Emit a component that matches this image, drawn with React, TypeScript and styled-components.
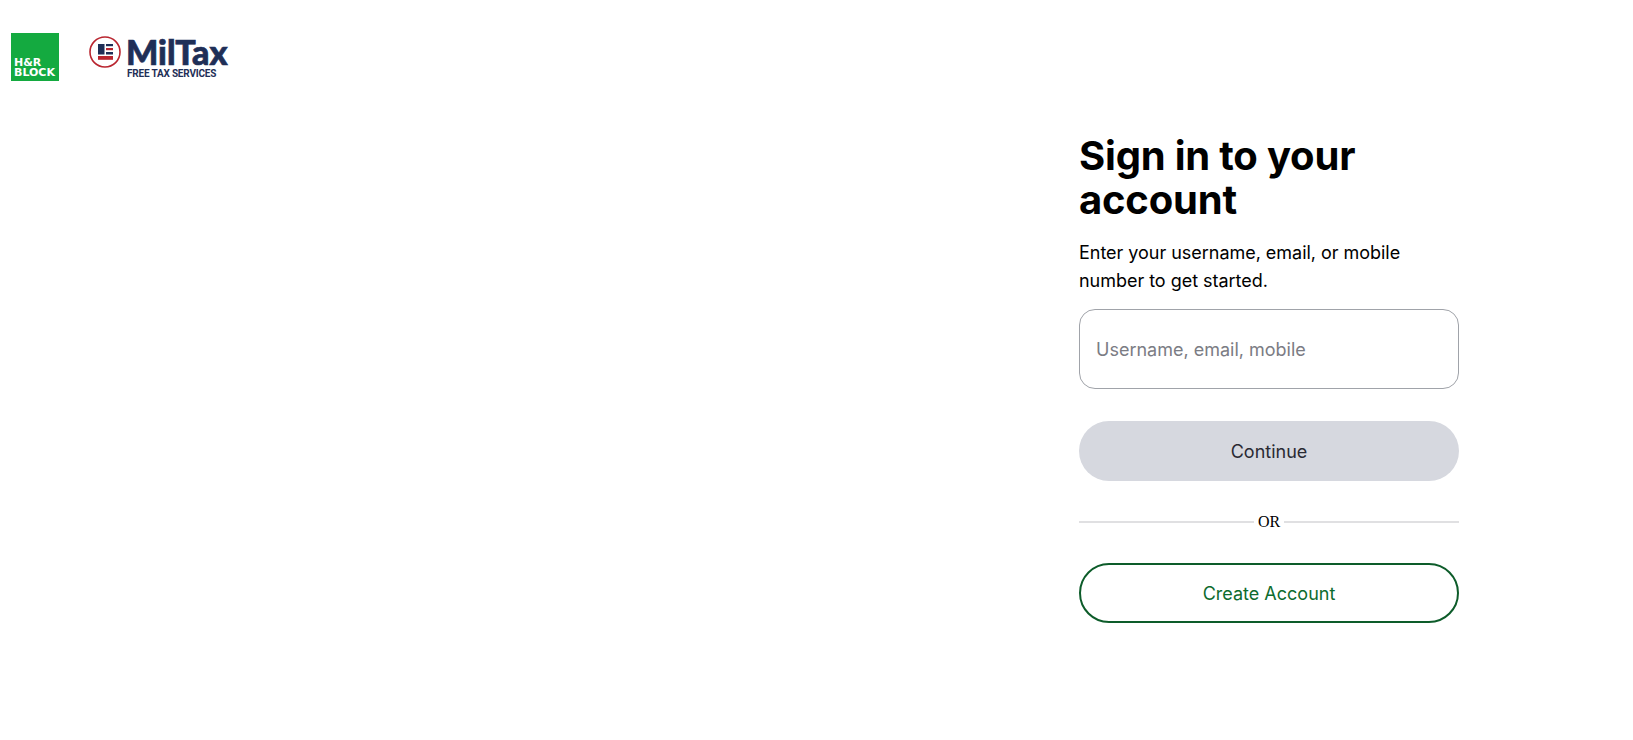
import React from 'react';
import styled, { createGlobalStyle } from 'styled-components';

const GlobalStyle = createGlobalStyle`
  html, body {
    margin: 0;
    padding: 0;
    background: #fff;
  }
  body {
    font-family: Inter, "Liberation Sans", sans-serif;
    color: #000;
  }
  * {
    box-sizing: border-box;
  }
`;

const App: React.FC = () => {
  return (
    <Page>
      <GlobalStyle />
      <Header>
        <BlockLogo>
          <BlockText>H&amp;R</BlockText>
          <BlockText>BLOCK</BlockText>
        </BlockLogo>
        <MilTaxLogo>
          <svg width="32" height="32" viewBox="0 0 32 32">
            <circle cx="16" cy="16" r="15" fill="#fff" stroke="#b9252f" strokeWidth="1.6" />
            <rect x="9" y="8" width="6.5" height="10.5" fill="#1f2f57" />
            <rect x="17" y="8" width="7" height="2.2" fill="#1f2f57" />
            <rect x="17" y="12" width="7" height="2.2" fill="#b9252f" />
            <rect x="17" y="16" width="7" height="2.5" fill="#1f2f57" />
            <rect x="9" y="20" width="15" height="3.8" fill="#b9252f" />
          </svg>
          <MilTaxWords>
            <MilTaxName>MilTax</MilTaxName>
            <MilTaxSub>FREE TAX SERVICES</MilTaxSub>
          </MilTaxWords>
        </MilTaxLogo>
      </Header>
      <Main>
        <Form>
          <Title>Sign in to your account</Title>
          <Intro>Enter your username, email, or mobile number to get started.</Intro>
          <UserInput placeholder="Username, email, mobile" />
          <ContinueButton type="button">Continue</ContinueButton>
          <Divider>
            <Line />
            <OrLabel>OR</OrLabel>
            <Line />
          </Divider>
          <CreateButton type="button">Create Account</CreateButton>
        </Form>
      </Main>
    </Page>
  );
};

const Page = styled.div`
  width: 100%;
  height: 740px;
  overflow: hidden;
`;

const Header = styled.header`
  display: flex;
  align-items: flex-start;
  gap: 30px;
  padding: 33px 0 0 11px;
`;

const BlockLogo = styled.div`
  width: 48px;
  height: 48px;
  background: #14aa40;
  display: flex;
  flex-direction: column;
  justify-content: flex-end;
  padding: 0 0 3px 3px;
`;

const BlockText = styled.span`
  font-family: "DejaVu Sans", sans-serif;
  font-size: 11px;
  line-height: 10px;
  font-weight: 700;
  color: #fff;
`;

const MilTaxLogo = styled.div`
  display: flex;
  align-items: flex-start;
  gap: 5px;
  padding-top: 3px;
`;

const MilTaxWords = styled.div`
  display: flex;
  flex-direction: column;
  gap: 2px;
  padding-top: 1px;
`;

const MilTaxName = styled.span`
  font-family: Lato, sans-serif;
  font-size: 34px;
  line-height: 30px;
  font-weight: 900;
  color: #1f2f57;
  -webkit-text-stroke: 0.7px #1f2f57;
`;

const MilTaxSub = styled.span`
  font-family: "Liberation Sans Narrow", Roboto, sans-serif;
  font-size: 10px;
  line-height: 9px;
  font-weight: 700;
  color: #1f2f57;
  white-space: nowrap;
  letter-spacing: -0.19px;
  padding-left: 1px;
`;

const Main = styled.main`
  display: flex;
  justify-content: flex-end;
  padding: 53px 174px 0 0;
`;

const Form = styled.form`
  width: 380px;
  display: flex;
  flex-direction: column;
`;

const Title = styled.h1`
  margin: 0;
  font-size: 40px;
  line-height: 44px;
  font-weight: 700;
  letter-spacing: -0.2px;
  color: #000;
`;

const Intro = styled.p`
  margin: 17px 0 0;
  font-size: 18px;
  line-height: 28px;
  letter-spacing: -0.03px;
  color: #000;
`;

const UserInput = styled.input`
  margin-top: 14px;
  width: 100%;
  height: 80px;
  border: 1px solid #a0a3a9;
  border-radius: 16px;
  padding: 0 16px;
  font-family: inherit;
  font-size: 18px;
  color: #000;
  outline: none;
  &::placeholder {
    color: #7b7c84;
    opacity: 1;
  }
`;

const ContinueButton = styled.button`
  margin-top: 32px;
  height: 60px;
  border: none;
  border-radius: 30px;
  background: #d6d8df;
  color: #2a2a33;
  font-family: inherit;
  font-size: 18px;
`;

const Divider = styled.div`
  margin-top: 31px;
  display: flex;
  align-items: center;
  gap: 4px;
  height: 20px;
`;

const Line = styled.span`
  flex: 1;
  height: 2px;
  background: #e0e0e2;
`;

const OrLabel = styled.span`
  font-family: "Liberation Serif", serif;
  font-size: 16px;
  line-height: 20px;
  color: #000;
`;

const CreateButton = styled.button`
  margin-top: 31px;
  height: 60px;
  border: 2px solid #0d5c2a;
  border-radius: 30px;
  background: #fff;
  color: #0d6b2e;
  font-family: inherit;
  font-size: 18px;
`;

export default App;
